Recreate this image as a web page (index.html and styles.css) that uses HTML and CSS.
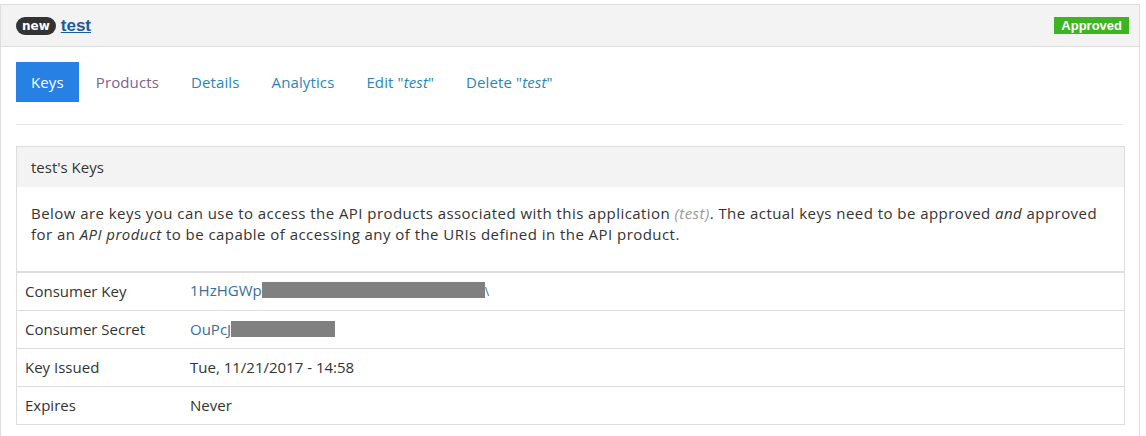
FILE: index.html
```html
<!DOCTYPE html>
<html>
<head>
<meta charset="utf-8">
<link rel="stylesheet" href="styles.css">
</head>
<body>
<div class="app-panel">
  <div class="app-heading">
    <div class="title">
      <span class="badge-new">new</span>
      <a class="app-name" href="#">test</a>
    </div>
    <span class="label-approved">Approved</span>
  </div>
  <div class="app-body">
    <ul class="tabs">
      <li class="tab active"><a href="#">Keys</a></li>
      <li class="tab visited"><a href="#">Products</a></li>
      <li class="tab"><a href="#">Details</a></li>
      <li class="tab"><a href="#">Analytics</a></li>
      <li class="tab"><a href="#">Edit "<em>test</em>"</a></li>
      <li class="tab"><a href="#">Delete "<em>test</em>"</a></li>
    </ul>
    <hr class="divider">
    <div class="keys-panel">
      <div class="keys-heading">test's Keys</div>
      <p class="keys-intro">Below are keys you can use to access the API products associated with this application <em class="muted">(test)</em>. The actual keys need to be approved <em>and</em> approved for an <em>API product</em> to be capable of accessing any of the URIs defined in the API product.</p>
      <table class="keys-table">
        <tr><td class="k">Consumer Key</td><td class="v link">1HzHGWp<span class="redact r1"></span><span class="frag">\</span></td></tr>
        <tr><td class="k">Consumer Secret</td><td class="v link">OuPcJ<span class="redact r3"></span></td></tr>
        <tr><td class="k">Key Issued</td><td class="v">Tue, 11/21/2017 - 14:58</td></tr>
        <tr><td class="k">Expires</td><td class="v">Never</td></tr>
      </table>
    </div>
  </div>
</div>
</body>
</html>
```
FILE: styles.css
```css
* { box-sizing: border-box; }
body {
  margin: 0;
  background: #fff;
  font-family: "Open Sans", "Liberation Sans", sans-serif;
  font-size: 15px;
  color: #333;
}
.app-panel {
  margin-top: 4px;
  width: 1140px;
  border: 1px solid #ddd;
  border-bottom: none;
  height: 440px;
}
.app-heading {
  display: flex;
  align-items: center;
  justify-content: space-between;
  height: 42px;
  background: #f3f3f3;
  border-bottom: 1px solid #ddd;
  padding: 0 10px 0 15px;
}
.title { display: flex; align-items: center; gap: 5px; }
.badge-new {
  display: inline-block;
  background: #333;
  color: #fff;
  font-family: "DejaVu Sans", "Liberation Sans", sans-serif;
  font-weight: bold;
  font-size: 12px;
  line-height: 18px;
  padding: 0 6px;
  border-radius: 9px;
}
.app-name {
  font-family: "Liberation Sans", Arial, sans-serif;
  font-weight: bold;
  font-size: 17px;
  color: #1b5a9d;
  text-decoration: underline;
}
.label-approved {
  background: #3cb521;
  color: #fff;
  font-family: "Liberation Sans", Arial, sans-serif;
  font-weight: bold;
  font-size: 13px;
  line-height: 17px;
  padding: 0 7px;
}
.app-body { padding: 15px 15px 0 15px; }
.tabs {
  list-style: none;
  margin: 0;
  padding: 0;
  display: flex;
  gap: 2px;
}
.tab a {
  display: block;
  padding: 10px 15px;
  line-height: 20px;
  color: #2a86b8;
  text-decoration: none;
  letter-spacing: 0.12px;
}
.tab.visited a { color: #7a6396; }
.tab.active a { background: #2780e3; color: #fff; }
.divider {
  margin: 22px 1px 21px 0;
  border: 0;
  border-top: 1px solid #e6e6e6;
}
.keys-panel {
  border: 1px solid #ddd;
  width: 1109px;
}
.keys-heading {
  background: #f3f3f3;
  height: 40px;
  line-height: 40px;
  padding: 0 14px;
}
.keys-intro {
  margin: 0;
  padding: 16px 14px 26px 14px;
  line-height: 21px;
  letter-spacing: 0.45px;
}
.muted { color: #999; }
.keys-table {
  width: 100%;
  border-collapse: collapse;
  border-top: 2px solid #ddd;
}
.keys-table td {
  padding: 8px 8px;
  line-height: 21px;
  border-top: 1px solid #ddd;
}
.keys-table tr:first-child td { border-top: none; padding-top: 7px; }
.keys-table td.k { width: 165px; }
.v.link { color: #3b6e98; }
.redact {
  display: inline-block;
  background: #808080;
  height: 16px;
  vertical-align: -2px;
}
.r1 { width: 223px; }
.r3 { width: 104px; }
.frag { color: #3b6e98; font-size: 12px; }
```
